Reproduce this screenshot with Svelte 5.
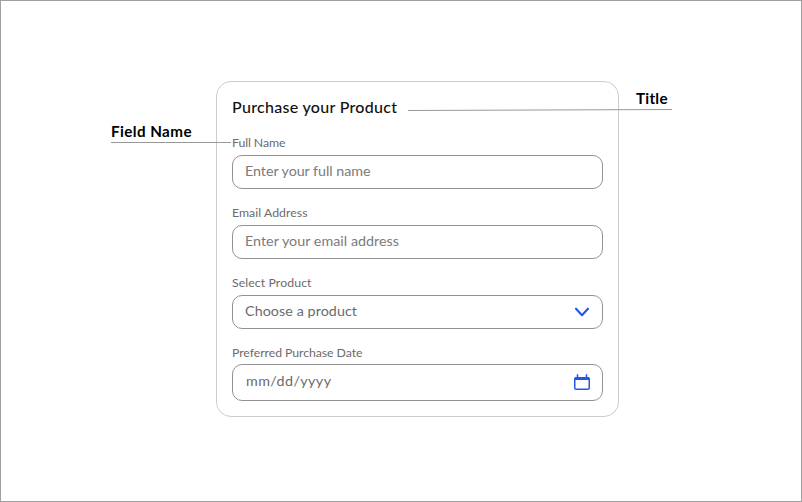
<script>
  const fields = [
    { label: 'Full Name', labelWidth: 53.5, text: 'Enter your full name', width: 125.5 },
    { label: 'Email Address', labelWidth: 75.5, text: 'Enter your email address', width: 154 },
    { label: 'Select Product', labelWidth: 79.5, text: 'Choose a product', width: 112, kind: 'select' },
    { label: 'Preferred Purchase Date', labelWidth: 130.5, text: 'mm/dd/yyyy', width: 85, kind: 'date' }
  ];

  // Tracks the letters so the text spans the given width.
  function fit(node, width) {
    const natural = node.getBoundingClientRect().width;
    node.style.letterSpacing = `${(width - natural) / (node.textContent.length - 1)}px`;
  }
</script>

<main>
  <section class="card">
    <h1><span use:fit={165}>Purchase your Product</span></h1>
    {#each fields as field}
      <div class="field">
        <div class="label"><span use:fit={field.labelWidth}>{field.label}</span></div>
        <div class="control {field.kind ?? 'text'}">
          <span use:fit={field.width}>{field.text}</span>
          {#if field.kind === 'select'}
            <svg width="16" height="12" viewBox="0 0 16 12">
              <path d="M2 2.7 L8 9.2 L14 2.7" fill="none" stroke="#2457e6" stroke-width="2.1" stroke-linecap="round" stroke-linejoin="round" />
            </svg>
          {:else if field.kind === 'date'}
            <svg width="16" height="16" viewBox="0 0 16 16">
              <rect x="0.75" y="3.75" width="14.5" height="11.5" rx="1.3" fill="none" stroke="#2457e6" stroke-width="1.5" />
              <path d="M3.5 0.3V4M12.5 0.3V4" fill="none" stroke="#2457e6" stroke-width="1.5" />
              <path d="M1 4.5H15" stroke="#2457e6" stroke-width="3" />
            </svg>
          {/if}
        </div>
      </div>
    {/each}
  </section>

  <div class="note name"><span use:fit={80.5}>Field Name</span></div>
  <div class="note title"><span use:fit={31.5}>Title</span></div>
  <svg class="leaders" width="802" height="502">
    <path d="M111 142.5H231M408 110.5L672 109.5" stroke="#999" stroke-width="1" />
  </svg>
</main>

<style>
  :global(body) { margin: 0; }
  main {
    position: relative;
    box-sizing: border-box;
    width: 802px;
    height: 502px;
    padding: 80px 0 0 215px;
    border: 1px solid #a0a0a0;
    background: #fff;
    font-family: Lato, "Noto Sans", sans-serif;
    overflow: hidden;
  }
  .card {
    box-sizing: border-box;
    width: 403px;
    height: 336px;
    padding: 14px 15px 0;
    border: 1px solid #ccc;
    border-radius: 15px;
  }
  span { white-space: nowrap; }
  h1 {
    margin: 0 0 10px;
    font-size: 16px;
    line-height: 22px;
    font-weight: 500;
    color: #111;
  }
  .field { height: 70px; }
  .label {
    height: 27px;
    font-size: 12.3px;
    line-height: 30px;
    color: #6b6b6b;
  }
  .control {
    box-sizing: border-box;
    display: flex;
    align-items: center;
    justify-content: space-between;
    height: 34px;
    padding: 0 12px;
    border: 1px solid #929292;
    border-radius: 10px;
    font-size: 14.3px;
    line-height: 20px;
    color: #7b7b7b;
  }
  .control span { margin-top: -2px; }
  .select, .date { color: #6b6b6b; }
  .date { height: 37px; margin-top: -1px; padding: 0 12px 2px 13px; }
  .date svg { margin-top: 1px; }
  .note {
    position: absolute;
    font-size: 15.2px;
    line-height: 20px;
    font-weight: 700;
    color: #000;
  }
  .name { left: 110px; top: 120px; }
  .title { left: 635px; top: 87px; }
  .leaders { position: absolute; left: -1px; top: -1px; }
</style>
